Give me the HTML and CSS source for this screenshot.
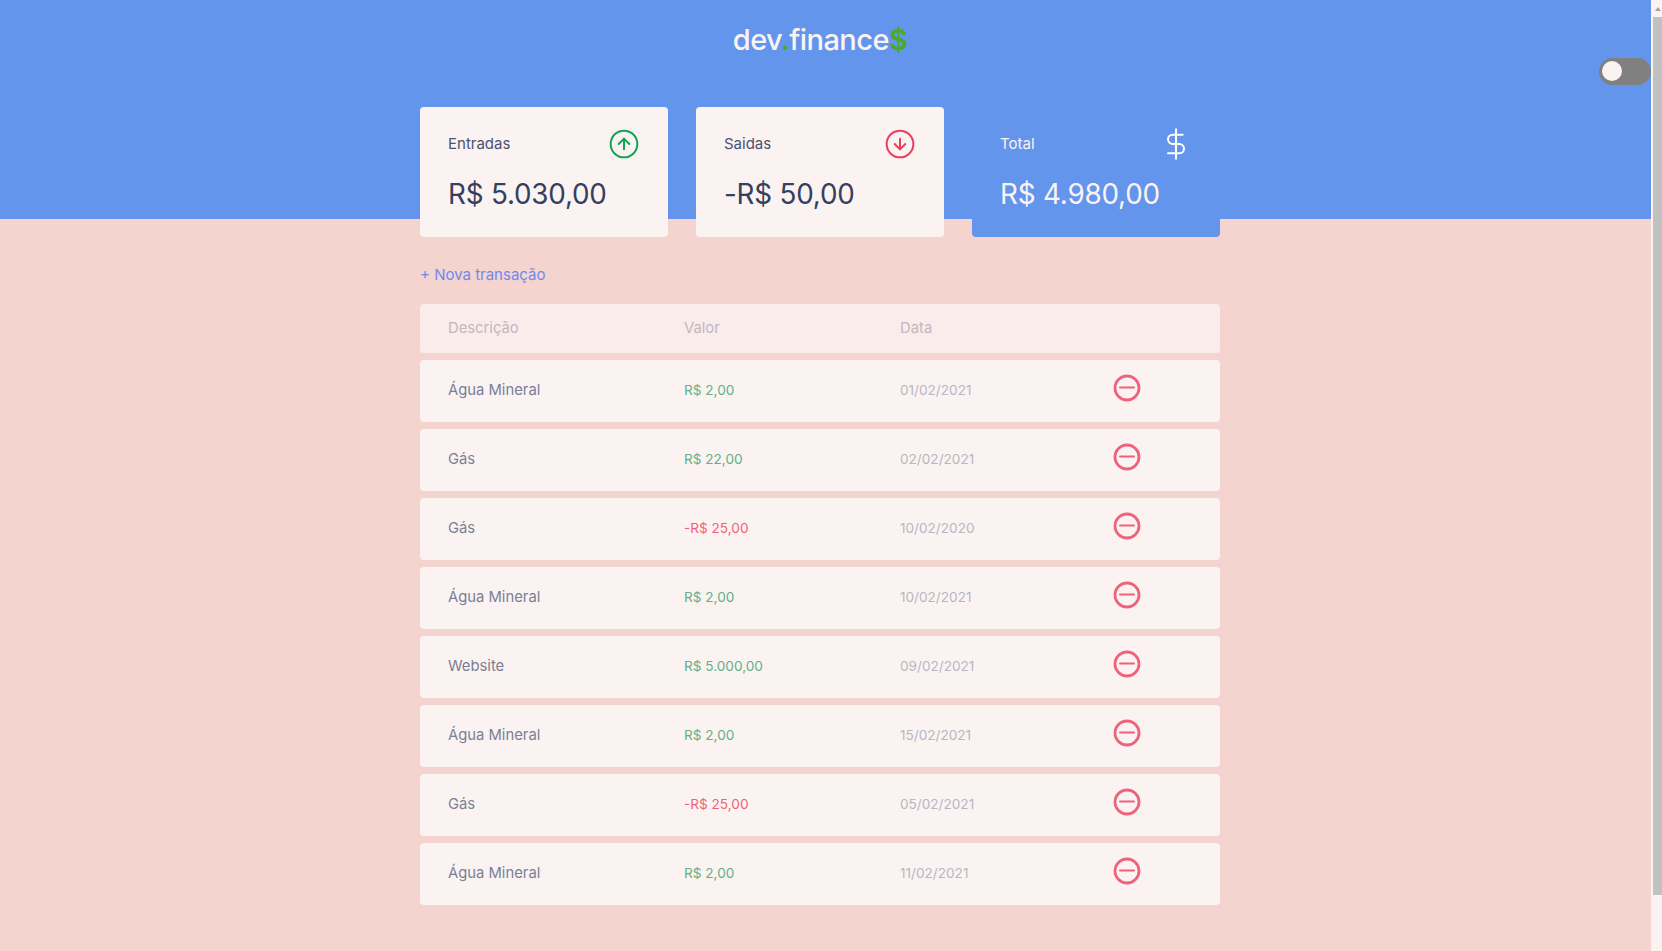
FILE: index.html
```html
<!DOCTYPE html>
<html lang="pt-BR">
<head>
  <meta charset="UTF-8">
  <title>dev.finance$</title>
  <link rel="stylesheet" href="styles.css">
</head>
<body>

<div class="page">
  <!-- HEADER -->
  <header class="header">
    <h1 class="logo">dev<span class="green">.</span>finance<span class="green dollar">$</span></h1>
    <div class="toggle"><span class="knob"></span></div>
  </header>

  <main class="container">
    <!-- CARDS -->
    <section class="cards">
      <div class="card">
        <div class="card-top">
          <span>Entradas</span>
          <svg class="icon" viewBox="0 0 24 24" fill="none" stroke="#12a454" stroke-width="1.5" stroke-linecap="round" stroke-linejoin="round">
            <circle cx="12" cy="12" r="10"></circle>
            <polyline points="16 12 12 8 8 12"></polyline>
            <line x1="12" y1="16" x2="12" y2="8"></line>
          </svg>
        </div>
        <p class="amount">R$ 5.030,00</p>
      </div>
      <div class="card">
        <div class="card-top">
          <span>Saidas</span>
          <svg class="icon" viewBox="0 0 24 24" fill="none" stroke="#e83f5b" stroke-width="1.5" stroke-linecap="round" stroke-linejoin="round">
            <circle cx="12" cy="12" r="10"></circle>
            <polyline points="8 12 12 16 16 12"></polyline>
            <line x1="12" y1="8" x2="12" y2="16"></line>
          </svg>
        </div>
        <p class="amount">-R$ 50,00</p>
      </div>
      <div class="card total">
        <div class="card-top">
          <span>Total</span>
          <svg class="icon" viewBox="0 0 24 24" fill="none" stroke="#fff" stroke-width="1.5" stroke-linecap="round" stroke-linejoin="round">
            <line x1="12" y1="1" x2="12" y2="23"></line>
            <path d="M17 5H9.5a3.5 3.5 0 0 0 0 7h5a3.5 3.5 0 0 1 0 7H6"></path>
          </svg>
        </div>
        <p class="amount">R$ 4.980,00</p>
      </div>
    </section>

    <a href="#" class="new-link">+ Nova transação</a>

    <!-- TRANSACTIONS -->
    <table class="data-table">
      <thead>
        <tr>
          <th class="col-desc">Descrição</th>
          <th class="col-value">Valor</th>
          <th class="col-date">Data</th>
          <th></th>
        </tr>
      </thead>
      <tbody id="rows"></tbody>
    </table>
  </main>
</div>

<!-- SCROLLBAR -->
<div class="scrollbar">
  <span class="arrow"></span>
  <span class="thumb"></span>
</div>

<script>
  let transactions = [
    { desc: "Água Mineral", value: "R$ 2,00", date: "01/02/2021" },
    { desc: "Gás", value: "R$ 22,00", date: "02/02/2021" },
    { desc: "Gás", value: "-R$ 25,00", date: "10/02/2020" },
    { desc: "Água Mineral", value: "R$ 2,00", date: "10/02/2021" },
    { desc: "Website", value: "R$ 5.000,00", date: "09/02/2021" },
    { desc: "Água Mineral", value: "R$ 2,00", date: "15/02/2021" },
    { desc: "Gás", value: "-R$ 25,00", date: "05/02/2021" },
    { desc: "Água Mineral", value: "R$ 2,00", date: "11/02/2021" }
  ];

  let tbody = document.getElementById("rows");

  transactions.forEach((item) => {
    let cls = item.value[0] === "-" ? "expense" : "income";
    tbody.innerHTML += `
      <tr>
        <td class="desc">${item.desc}</td>
        <td class="${cls}">${item.value}</td>
        <td class="date">${item.date}</td>
        <td class="remove">
          <svg viewBox="0 0 28 28" fill="none" stroke="#ee6379" stroke-linecap="round">
            <circle cx="14" cy="14" r="12" stroke-width="2.8"></circle>
            <line x1="7" y1="13.5" x2="21" y2="13.5" stroke-width="2"></line>
          </svg>
        </td>
      </tr>
    `;
  });
</script>

</body>
</html>
```

FILE: styles.css
```css
* {
  box-sizing: border-box;
}

html, body {
  height: 100%;
}

body {
  margin: 0;
  display: flex;
  overflow: hidden;
  font-family: "Inter", "Liberation Sans", sans-serif;
  font-size: 14px;
  color: #363f5f;
  background-color: #f5d3ce;
}

.page {
  position: relative;
  flex: 1;
  padding-right: 11px;
}

.header {
  position: absolute;
  top: 0;
  left: 0;
  right: 0;
  height: 219px;
  padding-right: 11px;
  background-color: #6495ed;
  text-align: center;
}

.logo {
  margin: 0;
  padding-top: 20px;
  font-size: 29px;
  line-height: 40px;
  font-weight: 500;
  letter-spacing: -0.55px;
  color: #fbf3f2;
}

.green {
  color: #49aa26;
}

.dollar {
  font-weight: 600;
}

.toggle {
  position: absolute;
  top: 58px;
  right: 0;
  width: 52px;
  height: 27px;
  border-radius: 14px;
  background-color: #808080;
}

.knob {
  position: absolute;
  top: 3px;
  left: 3px;
  width: 20px;
  height: 20px;
  border-radius: 50%;
  background-color: #fbf3f2;
}

.container {
  position: relative;
  width: 800px;
  margin: 0 auto;
  padding-top: 107px;
}

.cards {
  display: flex;
  gap: 28px;
}

.card {
  flex: 1;
  height: 130px;
  padding: 21px 28px 0;
  border-radius: 4px;
  background-color: #fbf3f2;
}

.card-top {
  display: flex;
  justify-content: space-between;
  align-items: center;
  font-size: 15px;
  line-height: 20px;
  color: #4a5270;
}

.total .card-top {
  color: #fbf3f2;
}

.card-top span {
  margin-top: -1px;
}

.icon {
  width: 32px;
  height: 32px;
}

.amount {
  margin: 14px 0 0;
  font-size: 27.8px;
  line-height: 40px;
  font-weight: 400;
  letter-spacing: -0.2px;
}

.total {
  background-color: #6495ed;
  color: #fbf3f2;
}

.new-link {
  display: block;
  margin: 27px 0 11px;
  line-height: 22px;
  font-size: 15px;
  color: #6e8af0;
  text-decoration: none;
}

.data-table {
  width: 100%;
  table-layout: fixed;
  border-collapse: separate;
  border-spacing: 0 7px;
  font-size: 14.8px;
}

.col-desc {
  width: 236px;
}

.col-value {
  width: 216px;
}

.col-date {
  width: 214px;
}

.data-table th {
  height: 49px;
  padding: 0 28px 2px;
  text-align: left;
  font-size: 14.8px;
  font-weight: 400;
  color: #c0b7c3;
  background-color: #f9ecea;
}

.data-table td {
  height: 62px;
  padding: 0 28px 3px;
  background-color: #fbf3f2;
}

.data-table th:first-child,
.data-table td:first-child {
  border-radius: 4px 0 0 4px;
}

.data-table th:last-child,
.data-table td:last-child {
  border-radius: 0 4px 4px 0;
}

.desc {
  color: #7a7f95;
}

.data-table .income,
.data-table .expense,
.data-table .date {
  font-size: 13.6px;
}

.income {
  color: #62b088;
}

.expense {
  color: #ee6379;
}

.date {
  color: #b9b6c3;
}

.remove svg {
  display: block;
  width: 28px;
  height: 28px;
  margin: -3px 0 0 -1px;
}

/* fake scrollbar, the window has no real one in the shot */
.scrollbar {
  position: relative;
  flex: 0 0 11px;
  padding-left: 2px;
  background-color: #fbf3f2;
}

.arrow {
  position: absolute;
  top: 7px;
  left: 4px;
  border-left: 3px solid transparent;
  border-right: 3px solid transparent;
  border-bottom: 4px solid #a3a3a3;
}

.thumb {
  display: block;
  margin-top: 17px;
  height: 878px;
  background-color: #c1c1c1;
}
```
